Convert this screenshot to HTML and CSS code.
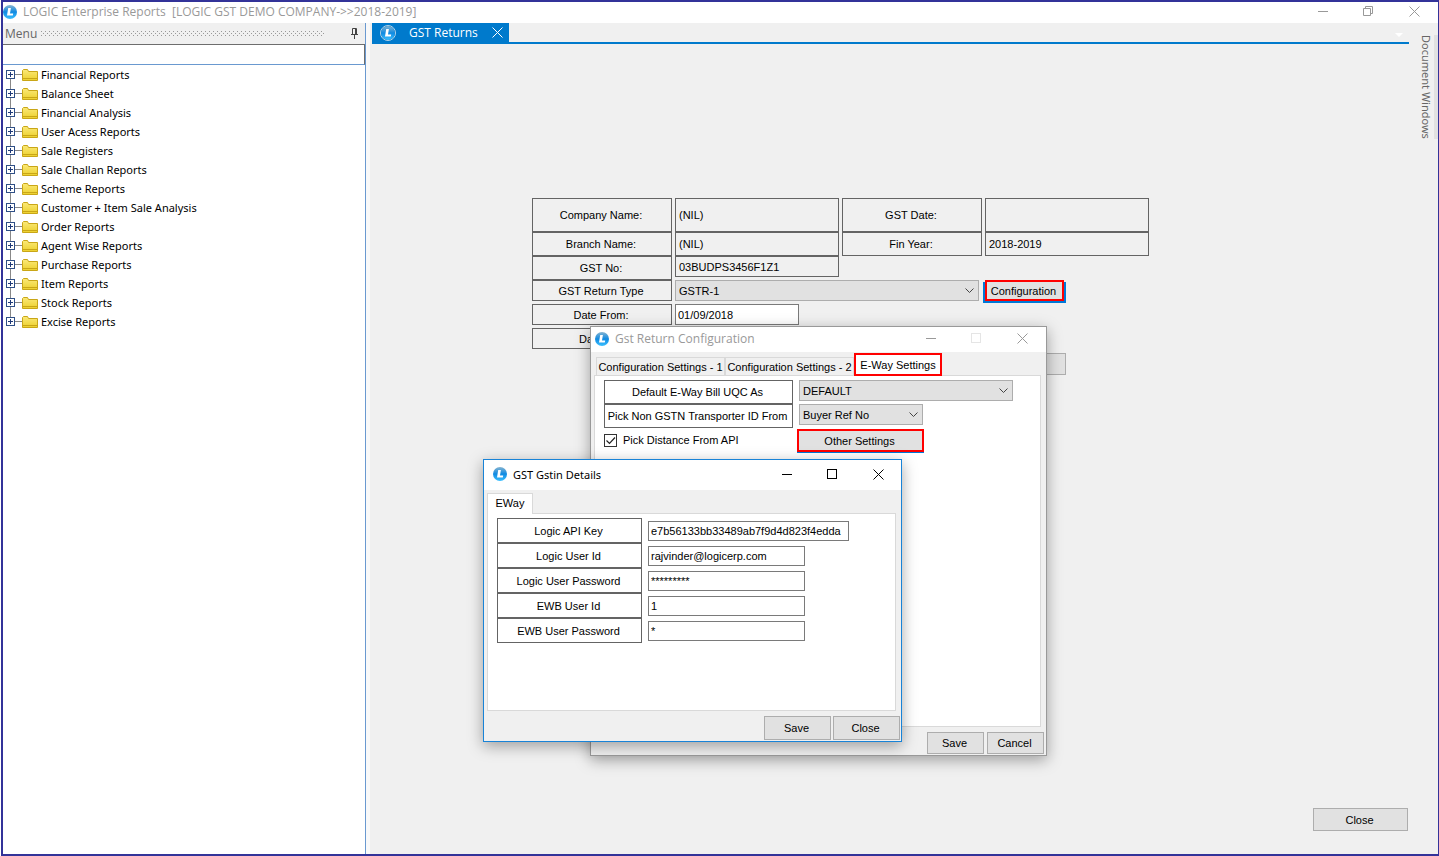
FILE: index.html
```html
<!DOCTYPE html>
<html lang="en">
<head>
  <meta charset="UTF-8">
  <meta name="viewport" content="width=device-width, initial-scale=1.0">
  <title>LOGIC Enterprise Reports</title>
  <link rel="stylesheet" href="styles.css">
</head>
<body>
  <!-- shared icons -->
  <svg class="sprite" aria-hidden="true">
    <defs>
      <linearGradient id="ball" x1="0" y1="0" x2="0" y2="1">
        <stop offset="0" stop-color="#86b4d0"/>
        <stop offset="0.5" stop-color="#0f8ae2"/>
        <stop offset="1" stop-color="#3cc0ff"/>
      </linearGradient>
      <linearGradient id="fold" x1="0" y1="0" x2="0" y2="1">
        <stop offset="0" stop-color="#fbe979"/>
        <stop offset="1" stop-color="#ecd02c"/>
      </linearGradient>
      <symbol id="logo" viewBox="0 0 14 14">
        <circle cx="7" cy="7" r="7" fill="url(#ball)"/>
        <path d="M5.2 3h2.700L7 8.400h3.200l-.4 2.200H4z" fill="#fff"/>
      </symbol>
      <symbol id="folder" viewBox="0 0 16 12">
        <path d="M.5 11.500v-10l1-1h4l1 2h9v9z" fill="url(#fold)" stroke="#c9a617"/>
        <path d="M1 9.500h14" stroke="#c9a617"/>
      </symbol>
      <symbol id="plus" viewBox="0 0 9 9">
        <rect x="0.5" y="0.5" width="8" height="8" fill="#fff" stroke="#2f4f86"/>
        <path d="M2 4.500h5M4.500 2v5" stroke="#1f3a78"/>
      </symbol>
      <symbol id="min" viewBox="0 0 11 11"><path d="M1 5.500h10" stroke="currentColor"/></symbol>
      <symbol id="max" viewBox="0 0 11 11"><rect x="0.5" y="0.5" width="9" height="9" fill="none" stroke="currentColor"/></symbol>
      <symbol id="restore" viewBox="0 0 11 11"><path d="M.5 2.500h7v7h-7zM2.500 2.500v-2h7v7h-2" fill="none" stroke="currentColor"/></symbol>
      <symbol id="x" viewBox="0 0 11 11"><path d="M.5.5l10 10M10.500.5l-10 10" stroke="currentColor"/></symbol>
    </defs>
  </svg>

  <div class="app">
    <header class="titlebar app-title">
      <svg class="logo"><use href="#logo"/></svg>
      <h1>LOGIC Enterprise Reports&nbsp; [LOGIC GST DEMO COMPANY-&gt;&gt;2018-2019]</h1>
      <div class="win-buttons">
        <button aria-label="Minimize"><svg><use href="#min"/></svg></button>
        <button aria-label="Restore"><svg><use href="#restore"/></svg></button>
        <button aria-label="Close"><svg><use href="#x"/></svg></button>
      </div>
    </header>

    <div class="workspace">
      <aside class="sidebar">
        <div class="menu-head">
          <span>Menu</span>
          <span class="grip"></span>
          <button class="pin" aria-label="Pin">
            <svg viewBox="0 0 8 11"><path d="M1.500 6.500v-6h4v6M0 6.500h7M3.500 7v4M4.500 1v5" fill="none" stroke="#444"/></svg>
          </button>
        </div>
        <input class="menu-search" type="text" aria-label="Search menu">
        <ul class="tree">
          <li><svg class="plus"><use href="#plus"/></svg><svg class="folder"><use href="#folder"/></svg><a href="#">Financial Reports</a></li>
          <li><svg class="plus"><use href="#plus"/></svg><svg class="folder"><use href="#folder"/></svg><a href="#">Balance Sheet</a></li>
          <li><svg class="plus"><use href="#plus"/></svg><svg class="folder"><use href="#folder"/></svg><a href="#">Financial Analysis</a></li>
          <li><svg class="plus"><use href="#plus"/></svg><svg class="folder"><use href="#folder"/></svg><a href="#">User Acess Reports</a></li>
          <li><svg class="plus"><use href="#plus"/></svg><svg class="folder"><use href="#folder"/></svg><a href="#">Sale Registers</a></li>
          <li><svg class="plus"><use href="#plus"/></svg><svg class="folder"><use href="#folder"/></svg><a href="#">Sale Challan Reports</a></li>
          <li><svg class="plus"><use href="#plus"/></svg><svg class="folder"><use href="#folder"/></svg><a href="#">Scheme Reports</a></li>
          <li><svg class="plus"><use href="#plus"/></svg><svg class="folder"><use href="#folder"/></svg><a href="#">Customer + Item Sale Analysis</a></li>
          <li><svg class="plus"><use href="#plus"/></svg><svg class="folder"><use href="#folder"/></svg><a href="#">Order Reports</a></li>
          <li><svg class="plus"><use href="#plus"/></svg><svg class="folder"><use href="#folder"/></svg><a href="#">Agent Wise Reports</a></li>
          <li><svg class="plus"><use href="#plus"/></svg><svg class="folder"><use href="#folder"/></svg><a href="#">Purchase Reports</a></li>
          <li><svg class="plus"><use href="#plus"/></svg><svg class="folder"><use href="#folder"/></svg><a href="#">Item Reports</a></li>
          <li><svg class="plus"><use href="#plus"/></svg><svg class="folder"><use href="#folder"/></svg><a href="#">Stock Reports</a></li>
          <li><svg class="plus"><use href="#plus"/></svg><svg class="folder"><use href="#folder"/></svg><a href="#">Excise Reports</a></li>
        </ul>
      </aside>

      <main class="document">
        <div class="doc-tabs">
          <div class="doc-tab">
            <svg class="logo"><use href="#logo"/></svg>
            <span>GST Returns</span>
            <button aria-label="Close tab"><svg><use href="#x"/></svg></button>
          </div>
          <button class="tab-list" aria-label="Open documents"></button>
        </div>

        <form class="returns">
          <div class="row tall">
            <span class="label">Company Name:</span><span class="value">(NIL)</span>
            <span class="label">GST Date:</span><span class="value"></span>
          </div>
          <div class="row">
            <span class="label">Branch Name:</span><span class="value">(NIL)</span>
            <span class="label">Fin Year:</span><span class="value">2018-2019</span>
          </div>
          <div class="row">
            <span class="label">GST No:</span><span class="value short">03BUDPS3456F1Z1</span>
          </div>
          <div class="row small">
            <label class="label" for="return-type">GST Return Type</label>
            <select class="combo type" id="return-type"><option>GSTR-1</option></select>
            <button type="button" class="btn config">Configuration</button>
          </div>
          <div class="row small">
            <label class="label" for="date-from">Date From:</label>
            <input class="field date" id="date-from" type="text" value="01/09/2018">
          </div>
          <div class="row small">
            <label class="label" for="date-to">Date To :</label>
            <input class="field date" id="date-to" type="text">
          </div>
          <button type="button" class="btn generate" aria-label="Generate"></button>
        </form>

        <button class="btn close-page">Close</button>
      </main>

      <aside class="dock">
        <button class="dock-tab">Document Windows</button>
      </aside>
    </div>

    <section class="dialog config-dialog" aria-labelledby="config-title">
      <header class="titlebar inactive">
        <svg class="logo"><use href="#logo"/></svg>
        <h2 id="config-title">Gst Return Configuration</h2>
        <div class="win-buttons">
          <button aria-label="Minimize"><svg><use href="#min"/></svg></button>
          <button aria-label="Maximize" disabled><svg><use href="#max"/></svg></button>
          <button aria-label="Close"><svg><use href="#x"/></svg></button>
        </div>
      </header>
      <div class="tabs">
        <button class="tab">Configuration Settings - 1</button>
        <button class="tab">Configuration Settings - 2</button>
        <button class="tab active marked">E-Way Settings</button>
      </div>
      <div class="panel settings">
        <label class="label" for="uqc">Default E-Way Bill UQC As</label>
        <select class="combo wide" id="uqc"><option>DEFAULT</option></select>
        <label class="label" for="transporter">Pick Non GSTN Transporter ID From</label>
        <select class="combo" id="transporter"><option>Buyer Ref No</option></select>
        <label class="check"><input type="checkbox" checked> Pick Distance From API</label>
        <button class="btn other">Other Settings</button>
      </div>
      <footer class="actions">
        <button class="btn">Save</button>
        <button class="btn">Cancel</button>
      </footer>
    </section>

    <section class="dialog gstin-dialog" aria-labelledby="gstin-title">
      <header class="titlebar">
        <svg class="logo"><use href="#logo"/></svg>
        <h2 id="gstin-title">GST Gstin Details</h2>
        <div class="win-buttons">
          <button aria-label="Minimize"><svg><use href="#min"/></svg></button>
          <button aria-label="Maximize"><svg><use href="#max"/></svg></button>
          <button aria-label="Close"><svg><use href="#x"/></svg></button>
        </div>
      </header>
      <div class="tabs">
        <button class="tab active">EWay</button>
      </div>
      <div class="panel account">
        <div class="row"><label class="label" for="api-key">Logic API Key</label><input class="field key" id="api-key" type="text" value="e7b56133bb33489ab7f9d4d823f4edda"></div>
        <div class="row"><label class="label" for="user-id">Logic User Id</label><input class="field" id="user-id" type="text" value="rajvinder@logicerp.com"></div>
        <div class="row"><label class="label" for="user-pass">Logic User Password</label><input class="field" id="user-pass" type="text" value="*********"></div>
        <div class="row"><label class="label" for="ewb-id">EWB User Id</label><input class="field" id="ewb-id" type="text" value="1"></div>
        <div class="row"><label class="label" for="ewb-pass">EWB User Password</label><input class="field" id="ewb-pass" type="text" value="*"></div>
      </div>
      <footer class="actions">
        <button class="btn">Save</button>
        <button class="btn">Close</button>
      </footer>
    </section>
  </div>
</body>
</html>
```

FILE: styles.css
```css
* {
  margin: 0;
  padding: 0;
  box-sizing: border-box;
}

body {
  font-family: "Liberation Sans", Arial, sans-serif;
  font-size: 11px;
  color: #000;
  background: #fff;
}

button,
input,
select {
  font: inherit;
  color: inherit;
}

button {
  border: none;
  background: none;
}

svg {
  display: block;
  flex: none;
}

.sprite {
  position: absolute;
  width: 0;
  height: 0;
}

.app {
  position: relative;
  min-height: 100vh;
  margin-left: 1px;
  display: flex;
  flex-direction: column;
  border: 2px solid #333399;
  border-right-width: 1px;
  background: #f0f0f0;
}

/* title bars */
.titlebar {
  display: flex;
  align-items: center;
  background: #fff;
  font-family: "Open Sans", sans-serif;
}

.titlebar h1,
.titlebar h2 {
  flex: 1;
  font-size: 12px;
  font-weight: 400;
}

.logo {
  width: 14px;
  height: 14px;
}

.app-title {
  height: 21px;
  padding: 0 18px 2px 0;
  gap: 6px;
  color: #999;
}

.win-buttons {
  display: flex;
  gap: 35px;
}

.win-buttons button,
.win-buttons svg,
.doc-tab button svg {
  width: 11px;
  height: 11px;
}

.inactive {
  color: #999;
}

.inactive button:disabled {
  color: #e5e5e5;
}

/* sidebar */
.workspace {
  flex: 1;
  display: flex;
}

.sidebar {
  width: 363px;
  flex: none;
  display: flex;
  flex-direction: column;
  background: #fff;
  border-right: 1px solid #6a99d0;
  font-family: "Noto Sans", sans-serif;
}

.menu-head {
  display: flex;
  align-items: center;
  height: 21px;
  padding: 0 6px 0 2px;
  background: #f0f0f0;
  font-family: "Open Sans", sans-serif;
  font-size: 12px;
  color: #666;
}

.grip {
  flex: 1;
  height: 5px;
  margin: 0 27px 0 4px;
  background:
    conic-gradient(from 270deg at 1px 1px, #999 90deg, transparent 0) 0 0 / 4px 4px,
    conic-gradient(from 270deg at 1px 1px, #999 90deg, transparent 0) 2px 2px / 4px 4px;
}

.pin svg {
  width: 8px;
  height: 11px;
}

.menu-search {
  width: 100%;
  height: 21px;
  border: 1px solid #6d6d6d;
  border-left: none;
  border-bottom-color: #6a99d0;
  outline: none;
}

.tree {
  list-style: none;
  padding-left: 3px;
  font-size: 11px;
}

.tree li {
  display: flex;
  align-items: center;
  height: 19px;
  background:
    linear-gradient(#888, #888) 4px 0 / 1px 100% no-repeat,
    linear-gradient(#888, #888) 4px 9px / 12px 1px no-repeat;
}

.tree li:first-child {
  background:
    linear-gradient(#888, #888) 4px 100% / 1px 10px no-repeat,
    linear-gradient(#888, #888) 4px 9px / 12px 1px no-repeat;
}

.tree li:last-child {
  background:
    linear-gradient(#888, #888) 4px 0 / 1px 10px no-repeat,
    linear-gradient(#888, #888) 4px 9px / 12px 1px no-repeat;
}

.plus {
  width: 9px;
  height: 9px;
}

.folder {
  width: 16px;
  height: 12px;
  margin: 0 3px 0 7px;
}

.tree a {
  color: #000;
  text-decoration: none;
}

/* document area */
.document {
  flex: 1;
  min-width: 0;
  display: flex;
  flex-direction: column;
  padding-left: 2px;
  border-left: 4px solid #f9f9f9;
}

.doc-tabs {
  display: flex;
  height: 21px;
  border-bottom: 2px solid #007acc;
}

.doc-tab {
  display: flex;
  align-items: center;
  width: 137px;
  height: 21px;
  padding: 0 6px 2px 8px;
  background: #007acc;
  color: #fff;
  font-family: "Open Sans", sans-serif;
  font-size: 12px;
}

.doc-tab .logo {
  width: 16px;
  height: 16px;
  border: 1px solid #b5d3e8;
  border-radius: 50%;
}

.doc-tab span {
  flex: 1;
  margin-left: 13px;
}

.tab-list {
  width: 0;
  height: 0;
  margin: 10px 6px 0 auto;
  border: 4px solid transparent;
  border-top-color: #fff;
}

.returns {
  display: flex;
  flex-direction: column;
  align-items: flex-start;
  margin: 154px 0 0 160px;
}

.row {
  display: flex;
  align-items: flex-start;
  gap: 3px;
  height: 24px;
}

.row.tall {
  height: 34px;
}

.row.small {
  height: 21px;
  margin-bottom: 3px;
}

.label,
.value {
  display: flex;
  align-items: center;
  height: 100%;
  border: 1px solid #646464;
}

.label {
  width: 140px;
  padding-right: 2px;
  justify-content: center;
}

.value {
  width: 164px;
  padding-left: 3px;
}

.value.short {
  height: 21px;
}

.combo {
  appearance: none;
  width: 124px;
  height: 21px;
  padding: 0 20px 0 3px;
  border: 1px solid #adadad;
  border-radius: 0;
  background: #e1e1e1 url("data:image/svg+xml,%3Csvg xmlns='http://www.w3.org/2000/svg' width='9' height='6'%3E%3Cpath d='M.5.5l4 4 4-4' fill='none' stroke='%23444'/%3E%3C/svg%3E") no-repeat right 4px center;
}

.combo.type {
  width: 304px;
}

.combo.wide {
  width: 214px;
}

.field {
  height: 20px;
  width: 157px;
  padding: 0 2px;
  border: 1px solid #7a7a7a;
  background: #fff;
  outline: none;
}

.field.date {
  width: 124px;
  height: 21px;
}

.btn {
  height: 22px;
  padding-right: 2px;
  border: 1px solid #adadad;
  background: #e1e1e1;
}

.config {
  width: 79px;
  height: 21px;
  margin-left: 3px;
  border: 2px solid #f00;
  box-shadow: 2px 2px 0 #0078d7, -2px 2px 0 #0078d7;
}

.generate {
  width: 124px;
  margin: 1px 0 0 410px;
}

.close-page {
  width: 95px;
  height: 23px;
  margin: auto 1px 23px auto;
}

.dock {
  flex: none;
  width: 29px;
  padding-top: 12px;
}

.dock-tab {
  margin-left: 9px;
  border-right: 4px solid #e1e1e1;
  writing-mode: vertical-rl;
  font-family: "Noto Sans", sans-serif;
  font-size: 11px;
  line-height: 16px;
  color: #666;
}

/* floating windows */
.dialog {
  position: absolute;
  display: flex;
  flex-direction: column;
  background: #f0f0f0;
  border: 1px solid #999;
  box-shadow: 0 4px 14px rgba(0, 0, 0, 0.35);
}

.dialog .titlebar {
  gap: 6px;
}

.config-dialog {
  left: 587px;
  top: 324px;
  width: 457px;
  height: 430px;
}

.config-dialog .titlebar {
  height: 25px;
  padding: 0 18px 2px 4px;
}

.gstin-dialog {
  left: 480px;
  top: 457px;
  width: 419px;
  height: 283px;
  border-color: #1883d7;
}

.gstin-dialog .titlebar {
  height: 30px;
  padding: 0 17px 2px 9px;
}

.gstin-dialog h2 {
  font-family: "Noto Sans", sans-serif;
  font-size: 11px;
}

.tabs {
  display: flex;
  align-items: flex-end;
  height: 23px;
  padding: 0 3px;
}

.tab {
  height: 18px;
  width: 129px;
  border: 1px solid #d9d9d9;
  border-bottom: none;
  white-space: nowrap;
}

.tab.active {
  position: relative;
  width: 46px;
  height: 21px;
  margin-bottom: -1px;
  padding-bottom: 2px;
  background: #fff;
}

.tab.marked {
  width: 88px;
  height: 23px;
  padding-bottom: 0;
  border: 2px solid #f00;
}

.config-dialog .tabs {
  padding-left: 5px;
}

.panel {
  flex: 1;
  margin: 0 5px 0 3px;
  border: 1px solid #d9d9d9;
  background: #fff;
}

.settings {
  display: grid;
  grid-template-columns: 189px 1fr;
  grid-auto-rows: 24px;
  column-gap: 6px;
  padding: 4px 9px;
}

.settings .label {
  width: auto;
}

.check {
  display: flex;
  align-items: center;
  gap: 6px;
}

.check input {
  appearance: none;
  width: 13px;
  height: 13px;
  border: 1px solid #333;
  background: url("data:image/svg+xml,%3Csvg xmlns='http://www.w3.org/2000/svg' width='11' height='11'%3E%3Cpath d='M1.500 5.500l3 3 5.500-6' fill='none' stroke='%23222' stroke-width='1.200'/%3E%3C/svg%3E") center no-repeat;
}

.other {
  width: 127px;
  height: 23px;
  margin: 1px 0 0 -2px;
  border: 2px solid #f00;
  box-shadow: 0 1px 0 #0078d7;
}

.account {
  padding: 4px 9px;
}

.account .row {
  height: 25px;
  gap: 6px;
  align-items: center;
}

.account .label {
  width: 145px;
}

.field.key {
  width: 201px;
}

.actions {
  display: flex;
  justify-content: flex-end;
  gap: 3px;
  padding: 5px 2px 1px;
}

.actions .btn {
  width: 57px;
}

.gstin-dialog .actions {
  gap: 2px;
  padding: 5px 1px 1px;
}

.gstin-dialog .actions .btn {
  width: 67px;
  height: 24px;
}
```
